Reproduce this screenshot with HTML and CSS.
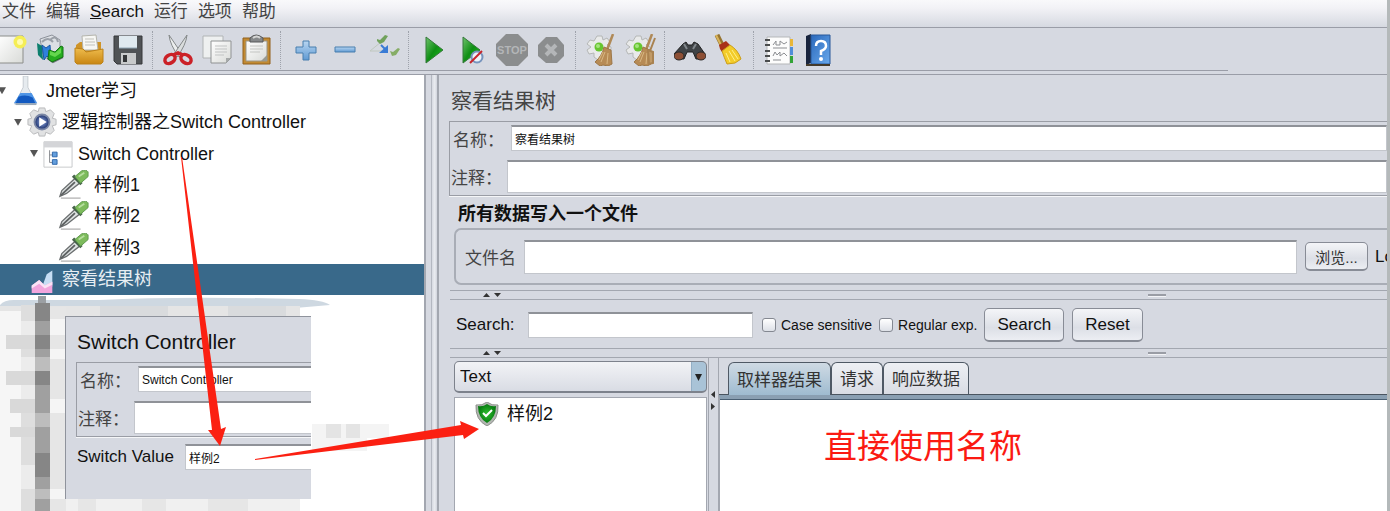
FILE: index.html
```html
<!DOCTYPE html>
<html lang="zh-CN">
    <head>
        <meta charset="utf-8">
        <title>JMeter</title>
        <link rel="stylesheet" href="styles.css">
    </head>
    <body>

        <!-- gradients and symbols shared by the icons -->
        <svg class="defs" width="0" height="0" aria-hidden="true">
            <defs>
                <linearGradient id="paper" x1="0" y1="0" x2="1" y2="1"><stop offset="0" stop-color="#ffffff"/><stop offset="1" stop-color="#d9dbd8"/></linearGradient>
                <linearGradient id="gold" x1="0" y1="0" x2="0" y2="1"><stop offset="0" stop-color="#efbd4e"/><stop offset="1" stop-color="#c98612"/></linearGradient>
                <linearGradient id="green" x1="0" y1="0" x2="1" y2="1"><stop offset="0" stop-color="#6fc36c"/><stop offset="0.5" stop-color="#0f8f14"/><stop offset="1" stop-color="#1fc41f"/></linearGradient>
                <linearGradient id="blue" x1="0" y1="0" x2="0" y2="1"><stop offset="0" stop-color="#b9d6f1"/><stop offset="1" stop-color="#5f9ad3"/></linearGradient>
                <linearGradient id="book" x1="0" y1="0" x2="1" y2="1"><stop offset="0" stop-color="#2a68bb"/><stop offset="1" stop-color="#69a9ec"/></linearGradient>
                <radialGradient id="orb"><stop offset="0" stop-color="#8fa8e0"/><stop offset="1" stop-color="#182c68"/></radialGradient>
                <radialGradient id="shield"><stop offset="0" stop-color="#2fc02f"/><stop offset="1" stop-color="#067a10"/></radialGradient>
                <symbol id="dropper" viewBox="0 0 32 32">
                    <path d="M2 30h21" stroke="#b9b9b9" stroke-width="1.5"/>
                    <path d="M1 28l2-6L17 9l5 5L8 25z" fill="#dfe3e3" stroke="#6b6f70" stroke-width="1.4"/>
                    <path d="M2 27L17 13" stroke="#5d6162" stroke-width="2"/>
                    <path d="M15 6l9 9" stroke="#47634a" stroke-width="3.5"/>
                    <path d="M17 7l7-6q5-2 7 1v5l-8 7z" fill="#7dbb5c" stroke="#5d974c"/>
                    <path d="M21 7l6-4" stroke="#b6de9f" stroke-width="2"/>
                </symbol>
                <symbol id="gear-broom" viewBox="0 0 32 32">
                    <path d="M12 2h5l1 4 4-2 3 4-3 3 4 2v5l-4 1 1 4-4 2-3-2-3 3-4-3v-4l-5 1-2-4 4-3-4-3 3-4 4 1z" fill="#e9eaea" stroke="#b5b7b6"/>
                    <circle cx="14" cy="13" r="4.5" fill="#67c52f"/><circle cx="13" cy="12" r="2" fill="#a4e47e"/>
                    <path d="M28 0l-6 16" stroke="#b08a58" stroke-width="2.5"/>
                    <path d="M19 13l7 3 1 14-4 2-5-1-3 1-5-4q7-6 9-15z" fill="#b78b55" stroke="#9c7748"/>
                    <path d="M20 18l-4 10M23 19l-1 11M18 18l-4 8" stroke="#d9b884"/>
                </symbol>
            </defs>
        </svg>

        <nav class="menubar">
            <button>文件</button>
            <button>编辑</button>
            <button class="latin"><u>S</u>earch</button>
            <button>运行</button>
            <button>选项</button>
            <button>帮助</button>
        </nav>

        <div class="toolbar">
            <button aria-label="新建"><svg viewBox="0 0 32 32"><path d="M3 2h25v27H3z" fill="url(#paper)" stroke="#8c8e8b"/><circle cx="25" cy="8" r="6.5" fill="#f5ee55"/><circle cx="25" cy="8" r="3" fill="#fffcb0"/></svg></button>
            <button aria-label="模板"><svg viewBox="0 0 32 32"><path d="M6 5l12-4 8 5v14H9z" fill="#dcdfe4" stroke="#8d929b"/><path d="M8 8q6-6 11 0M16 6q6-6 8 2" fill="none" stroke="#9ba0a8" stroke-width="2"/><path d="M3 9l5 3 1 14-5-5z" fill="#0d7f6e"/><path d="M8 11l4 3 4-3 1 15-4-4-3 4z" fill="#2f80dc" stroke="#1a56a3"/><path d="M13 24l6 4 10-5" stroke="#6f757b" stroke-width="2" fill="none"/><path d="M15 16l6 2 6-6 2 1v10l-11 5-4-3z" fill="#27ad20" stroke="#137512"/><path d="M16 17l5 2 6-5v5l-6 4-5-2z" fill="#65d74e"/></svg></button>
            <button aria-label="打开"><svg viewBox="0 0 32 32"><path d="M3 11l4-3h21v20H3z" fill="#cf9428"/><path d="M9 2l14-1 2 15H10z" fill="#f7f7f4" stroke="#b4b4ac"/><path d="M12 5h9M12 8h10M12 11h10" stroke="#c1c1bb"/><path d="M2 14l8 1 3 3 17-3v13l-2 2H4l-2-2z" fill="url(#gold)" stroke="#bd8219"/></svg></button>
            <button aria-label="保存"><svg viewBox="0 0 32 32"><path d="M2 2h28v28H5l-3-3z" fill="#505356" stroke="#37393b"/><path d="M7 2h18v12H7z" fill="#dfe9ef"/><path d="M7 14h18" stroke="#90a7b5"/><path d="M9 19h15v11H9z" fill="#c8cacb"/><path d="M11 21h4v7h-4z" fill="#333537"/></svg></button>
            <hr>
            <button aria-label="剪切"><svg viewBox="0 0 32 32"><path d="M7 1l13 19-3 3Q8 11 7 1z" fill="#eceeee" stroke="#85898a"/><path d="M25 1q-1 10-10 22l-3-3z" fill="#dadddd" stroke="#85898a"/><ellipse cx="8" cy="25" rx="5.5" ry="4" transform="rotate(-35 8 25)" fill="none" stroke="#cb2127" stroke-width="3.5"/><ellipse cx="24" cy="25" rx="5.5" ry="4" transform="rotate(35 24 25)" fill="none" stroke="#cb2127" stroke-width="3.5"/><path d="M11 21l5-2 5 2" fill="none" stroke="#cb2127" stroke-width="3.5"/></svg></button>
            <button aria-label="复制"><svg viewBox="0 0 32 32"><path d="M2 2h20v22H2z" fill="#eef0f0" stroke="#b1b4b5"/><path d="M10 7h20v17l-5 5H10z" fill="url(#paper)" stroke="#8f9293"/><path d="M14 12h12M14 15h12M14 18h12M14 21h9" stroke="#c1c3c3"/><path d="M30 24h-5v5z" fill="#a6a9a9"/></svg></button>
            <button aria-label="粘贴"><svg viewBox="0 0 32 32"><path d="M3 4h27v26H3z" fill="#c28a32" stroke="#91611c"/><path d="M6 7h21v20H6z" fill="url(#paper)" stroke="#9c9788"/><path d="M10 12h13M10 15h13M10 18h10" stroke="#c3c5c2"/><path d="M27 21v6h-6z" fill="#999a91"/><path d="M10 8V4q6-6 13 0v4z" fill="#85888a" stroke="#57595a"/><path d="M13 4q4-3 7 0" fill="none" stroke="#d4d5d5" stroke-width="2"/></svg></button>
            <hr>
            <button aria-label="展开"><svg viewBox="0 0 32 32"><path d="M13 7h6v6h7v6h-7v7h-6v-7H6v-6h7z" fill="url(#blue)" stroke="#497eae"/></svg></button>
            <button aria-label="折叠"><svg viewBox="0 0 32 32"><path d="M6 13h20v5H6z" fill="url(#blue)" stroke="#497eae"/></svg></button>
            <button aria-label="切换"><svg viewBox="0 0 32 32"><path d="M2 17L13 8M2 17h13" stroke="#c0c8bf" fill="none"/><path d="M9 5l3 1 5-5 3 1-4 6-4 2-3-3z" fill="#71a25c"/><path d="M13 11l5 5" stroke="#397bd5" stroke-width="2"/><path d="M20 11v8h-9z" fill="#397bd5"/><path d="M22 17l3 1 5-4 2 1-4 6-4 1z" fill="#86ad66"/></svg></button>
            <hr>
            <button aria-label="启动"><svg viewBox="0 0 32 32"><path d="M8 3l17 13L8 29z" fill="url(#green)" stroke="#35783a"/></svg></button>
            <button aria-label="不停顿启动"><svg viewBox="0 0 32 32"><path d="M6 3l17 13L6 29z" fill="url(#green)" stroke="#35783a"/><circle cx="20" cy="23" r="5.5" fill="#edf3fa" stroke="#7794bd" stroke-width="2"/><path d="M13 29L25 17" stroke="#c8252b" stroke-width="2"/></svg></button>
            <button aria-label="停止" disabled><svg viewBox="0 0 32 32"><path d="M10 0h12l10 10v12L22 32H10L0 22V10z" fill="#8b8d8e"/><text class="stop-text" x="16" y="20" text-anchor="middle">STOP</text></svg></button>
            <button aria-label="关闭" disabled><svg viewBox="0 0 32 32"><path d="M11 3h11l7 8v11l-7 7H11l-8-7V11z" fill="#8b8d8e"/><path d="M11 11l10 10M21 11L11 21" stroke="#b4b6b8" stroke-width="4"/></svg></button>
            <hr>
            <button aria-label="清除"><svg><use href="#gear-broom"/></svg></button>
            <button aria-label="清除全部"><svg viewBox="0 0 32 32"><use href="#gear-broom" width="32" height="32"/><path d="M31 4l-5 13M24 16l5 2v11l-4 1z" stroke="#a98250" stroke-width="2" fill="#c19a66"/></svg></button>
            <hr>
            <button aria-label="查找"><svg viewBox="0 0 32 32"><path d="M9 10l3-2 2 3h4l2-3 4 2 7 10-2 5h-7l-3-7h-6l-3 7H3l-3-5z" fill="#3f4346" stroke="#222"/><path d="M10 10l3 5M22 10l-3 5" stroke="#81878b" stroke-width="2"/><ellipse cx="5" cy="22" rx="5" ry="4" fill="#8d4f35" stroke="#2d2a29"/><ellipse cx="27" cy="22" rx="5" ry="4" fill="#8d4f35" stroke="#2d2a29"/></svg></button>
            <button aria-label="重置查找"><svg viewBox="0 0 32 32"><path d="M4 1l6 12" stroke="#96742f" stroke-width="5"/><path d="M3 1l6 12" stroke="#d9b45a" stroke-width="2"/><path d="M7 15l-1-4 7-4 4 4-1 3-7 4z" fill="#a93118"/><path d="M9 17l8-6q8 5 11 14l-6 4-8 1q-3-7-5-13z" fill="#f3cc2a" stroke="#cb9d19"/><path d="M13 19l4 9M16 17l6 10M19 16l6 9" stroke="#fff08a"/></svg></button>
            <hr>
            <button aria-label="函数助手"><svg viewBox="0 0 32 32"><path d="M4 3h23v27H4z" fill="#fcfcfc" stroke="#b5b7b9"/><path d="M27 5h3v7h-3z" fill="#e9b637"/><path d="M27 13h3v8h-3z" fill="#4f8dd8"/><path d="M27 22h3v7h-3z" fill="#31a336"/><path d="M2 6h5M2 11h5M2 17h5M2 22h5M2 27h5" stroke="#4b4d4e" stroke-width="2"/><path d="M10 11l3-4v4h4V7l4 3 3-2M10 22l2-4 2 3 3-3v4l4-3 3 3M10 14h14M10 26h8" fill="none" stroke="#8b8d91"/></svg></button>
            <button aria-label="帮助"><svg viewBox="0 0 32 32"><path d="M4 2l5-2v29l-5 2z" fill="#18243d"/><path d="M9 1h19v29H9z" fill="url(#book)" stroke="#28599a"/><path d="M4 31h24" stroke="#443a2a" stroke-width="2"/><path d="M14 12q0-5 5-5t5 5q0 3-5 5v4" fill="none" stroke="#fff" stroke-width="2.5"/><circle cx="19" cy="25" r="2" fill="#fff"/></svg></button>
        </div>

        <main class="workspace">

            <section class="tree-panel">
                <ul class="tree">
                    <li class="level-0"><i class="twist"></i><svg viewBox="0 0 32 32"><path d="M13 0h5v12l9 18H4l9-18z" fill="#e6ebef" stroke="#c3cad0"/><path d="M10 18h12l6 11H3z" fill="#4f95e6"/><path d="M8 22q8-3 15 1l3 6H5z" fill="#1259c0"/><path d="M5 30h22" stroke="#9ba9b8" stroke-width="2"/></svg><span>Jmeter学习</span></li>
                    <li class="level-1"><i class="twist"></i><svg viewBox="0 0 32 32"><path d="M13 1h6l1 4 5-2 4 4-2 5 4 1v6l-4 1 2 5-4 4-5-2-1 4h-6l-1-4-5 2-4-4 2-5-4-1v-6l4-1-2-5 4-4 5 2z" fill="#e1e2e3" stroke="#b6b8ba"/><circle cx="16" cy="16" r="8" fill="url(#orb)" stroke="#7b87a5" stroke-width="2"/><path d="M13 11l8 5-8 5z" fill="#fff"/></svg><span>逻辑控制器之Switch Controller</span></li>
                    <li class="level-2"><i class="twist"></i><svg viewBox="0 0 32 32"><path d="M1 3h30v27H1z" fill="#fff" stroke="#c5c7ca"/><path d="M1 3h30v6H1z" fill="#d4d5d8"/><path d="M7 12v13h4M7 17h4" fill="none" stroke="#84888d"/><path d="M10 14h5v5h-5zM10 22h5v5h-5z" fill="#639edc" stroke="#2b64aa"/></svg><span>Switch Controller</span></li>
                    <li class="level-3"><svg><use href="#dropper"/></svg><span>样例1</span></li>
                    <li class="level-3"><svg><use href="#dropper"/></svg><span>样例2</span></li>
                    <li class="level-3"><svg><use href="#dropper"/></svg><span>样例3</span></li>
                    <li class="level-1 selected"><i class="twist leaf"></i><svg viewBox="0 0 32 32"><path d="M17 22l4-11 6-4v17l-8 2z" fill="#c7def4"/><path d="M5 31v-8l8-6 6 6 8-4v12z" fill="#f2a5dd"/><path d="M5 23l8-6 6 6 8-4v3l-8 4-6-5-8 5z" fill="#fbe3f5"/></svg><span>察看结果树</span></li>
                </ul>

                <svg class="mosaic" viewBox="0 0 400 216" aria-hidden="true">
                    <path d="M0 10q4-5 14-5l85 0q80-4 200-1 24 1 31 6l-70 6H0z" fill="#ced8e1"/>
                    <path d="M0 11h300v10H0z" fill="#e5e5e5"/>
                    <path d="M0 16h21v200H0z" fill="#f6f6f6"/>
                    <path d="M21 10h14v206H21z" fill="#dedede"/>
                    <path d="M35 8h15v208H35z" fill="#a0a0a0"/>
                    <path d="M50 12h16v204H50z" fill="#e6e6e6"/>
                    <path d="M38 1h8v8h-8z" fill="#9b9fa3"/>
                    <path d="M6 40h29v14H6zM6 76h29v14H6zM10 104h25v14H10zM10 132h25v10H10z" fill="#d9d9d9"/>
                    <path d="M21 26h14v14H21zM21 62h14v14H21zM21 90h14v14H21zM21 170h14v24H21z" fill="#ececec"/>
                    <path d="M35 8h15v18H35zM35 40h15v14H35zM35 76h15v14H35zM35 158h15v24H35z" fill="#868686"/>
                    <path d="M35 62h15v14H35zM35 118h15v14H35zM35 194h15v10H35z" fill="#bdbdbd"/>
                    <path d="M50 24h16v16H50zM50 54h16v10H50zM50 104h16v14H50zM50 194h16v10H50z" fill="#f5f5f5"/>
                    <path d="M66 203h234v13H66z" fill="#f0f0f0"/>
                    <path d="M78 203h18v13H78zM142 203h24v13h-24zM208 203h40v13h-40z" fill="#e6e6e6"/>
                    <path d="M100 11h68v10H100zM228 11h58v10h-58z" fill="#d9dbdd"/>
                    <path d="M312 129h77v14h-77zM312 143h55v13h-55z" fill="#f4f4f4"/>
                    <path d="M326 129h15v14h-15zM346 129h14v14h-14z" fill="#e4e4e4"/>
                </svg>

                <form class="popup">
                    <h2>Switch Controller</h2>
                    <div class="name-box">
                        <div class="row name"><label for="sc-name">名称：</label><input id="sc-name" value="Switch Controller"></div>
                        <div class="row comment"><label for="sc-comment">注释：</label><input id="sc-comment"></div>
                    </div>
                    <div class="row value"><label for="sc-value">Switch Value</label><input id="sc-value" value="样例2"></div>
                </form>
            </section>

            <div class="splitter"></div>

            <section class="detail">
                <h1>察看结果树</h1>
                <div class="name-box">
                    <div class="row name"><label for="name">名称：</label><input id="name" value="察看结果树"></div>
                    <div class="row comment"><label for="comment">注释：</label><input id="comment"></div>
                </div>

                <h3>所有数据写入一个文件</h3>
                <div class="file-box">
                    <label for="filename">文件名</label>
                    <input id="filename">
                    <button class="btn browse">浏览...</button>
                    <span class="log">Lo</span>
                </div>

                <div class="divider"><i class="up"></i><i class="down"></i><i class="grip"></i></div>

                <form class="search-row">
                    <label for="search">Search:</label>
                    <input id="search" class="search">
                    <label class="check"><input type="checkbox">Case sensitive</label>
                    <label class="check"><input type="checkbox">Regular exp.</label>
                    <button type="button" class="btn">Search</button>
                    <button type="button" class="btn">Reset</button>
                </form>

                <div class="divider"><i class="up"></i><i class="down"></i><i class="grip"></i></div>

                <div class="results">
                    <div class="result-list">
                        <div class="combo">
                            <select aria-label="Renderer"><option>Text</option></select>
                        </div>
                        <ul>
                            <li><svg viewBox="0 0 24 24"><path d="M12 0q5 4 11 3 1 15-11 21Q0 18 1 3q6 1 11-3z" fill="#b3b6b2" stroke="#8d918c"/><path d="M12 2q4 3 9 2 0 12-9 17Q3 16 3 4q5 1 9-2z" fill="url(#shield)"/><path d="M8 11l3 3 6-6" fill="none" stroke="#fff" stroke-width="2"/></svg><span>样例2</span></li>
                        </ul>
                    </div>
                    <div class="mini-splitter"><i class="left"></i><i class="right"></i></div>
                    <div class="tabs">
                        <div class="tab-bar">
                            <button class="active">取样器结果</button>
                            <button>请求</button>
                            <button>响应数据</button>
                        </div>
                        <div class="tab-content"><p class="note">直接使用名称</p></div>
                    </div>
                </div>
            </section>
        </main>

        <svg class="arrows" width="500" height="500" aria-hidden="true">
            <path d="M181 157h1l39 272 5-2-6 19-12-16 4 0z"/>
            <path d="M255 460v-1l206-34-1-4 19 8-15 10-1-4z"/>
        </svg>

    </body>
</html>
```

FILE: styles.css
```css
* { margin: 0; padding: 0; box-sizing: border-box; font-family: "Liberation Sans", "Noto Sans CJK SC", sans-serif; }
html, body { width: 100%; height: 100%; }
body { display: flex; flex-direction: column; overflow: hidden; position: relative; background: #d6d9e1; border-right: 3px solid #b4b9ba; font-size: 17px; color: #111111; }
button, input, select { font-size: 17px; color: #111111; }
ul { list-style: none; }
.defs { position: absolute; }

.menubar { height: 28px; flex: none; display: flex; gap: 10px; padding: 0 2px 3px 2px; background: linear-gradient(#f9f9fb, #f2f2f6 30%, #d6d9e1); border-bottom: 1px solid #9a9da7; }
.menubar button { background: none; border: none; line-height: 22px; color: #444444; }
.menubar .latin { color: #111111; }

.toolbar { height: 43px; flex: none; width: 1237px; max-width: 100%; display: flex; align-items: center; margin-left: -9px; padding-top: 1px; border-bottom: 1px solid #9a9da7; }
.toolbar button { width: 39px; height: 40px; flex: none; background: none; border: none; display: flex; align-items: center; justify-content: center; }
.toolbar svg { width: 32px; height: 32px; }
.toolbar hr { width: 1px; height: 38px; margin: 0 5px; border: none; border-left: 1px dotted #9ea2ab; }
.toolbar .stop-text { font-size: 11px; font-weight: bold; fill: #b4b6b8; }

.workspace { flex: 1; min-height: 0; display: flex; margin-top: 3px; border-top: 1px solid #9a9da7; }

.tree-panel { position: relative; width: 424px; flex: none; background: #ffffff; overflow: hidden; }
.tree { height: 220px; display: grid; grid-auto-rows: 1fr; font-size: 18px; }
.tree li { display: flex; align-items: center; line-height: 28px; }
.tree li svg { width: 32px; height: 30px; flex: none; margin-right: 4px; }
.tree .twist { width: 8px; height: 7px; flex: none; margin-right: 4px; background: #555555; clip-path: polygon(0 0, 100% 0, 50% 100%); }
.tree .leaf { visibility: hidden; }
.tree .level-0 { margin-left: -2px; }
.tree .level-1 { padding-left: 14px; }
.tree .level-2 { padding-left: 30px; }
.tree .level-3 { padding-left: 58px; }
.tree .selected { background: #39698a; color: #e8eef3; }

.mosaic { position: absolute; left: 0; top: 220px; width: 400px; height: 216px; }

.popup { position: absolute; left: 65px; top: 241px; width: 246px; height: 183px; padding: 5px 0 0 11px; background: #d6d9e1; border-left: 1px solid #8f939c; border-top: 1px solid #8f939c; overflow: hidden; }
.popup h2 { font-size: 21px; font-weight: normal; line-height: 40px; }
.popup input { border-right: none; }

.row { display: flex; align-items: center; }
.row label { flex: none; color: #444444; }
.row input { flex: 1; min-width: 0; height: 26px; padding: 0 3px; font-size: 12px; }
.row.name { padding-left: 3px; }
.row.name label { width: 58px; }
.row.comment { padding-left: 1px; }
.row.comment label { width: 56px; }
.row.comment input { height: 33px; }
.row.value { margin-top: 7px; }
.row.value label { width: 108px; color: #111111; }

input { background: #ffffff; border: 1px solid #c3c6cc; border-top: 2px solid #8f9298; border-radius: 0; outline: none; }

.name-box { display: flex; flex-direction: column; gap: 9px; margin-left: -1px; padding: 3px 0 2px 0; border: 1px solid #9a9da5; border-right: none; box-shadow: 0 1px 0 #f5f6f8; }

.splitter { width: 14px; flex: none; border-left: 2px solid #a3a7b0; border-right: 1px solid #a3a7b0; background: linear-gradient(90deg, #d6d9e1 5px, #b4b8c1 5px, #b4b8c1 6px, #d6d9e1 6px, #eceef2 9px, #d6d9e1 10px); }

.detail { flex: 1; min-width: 0; display: flex; flex-direction: column; padding-left: 11px; border-left: 1px solid #a3a7b0; overflow: hidden; }
.detail h1 { padding: 6px 0 0 1px; font-size: 21px; font-weight: normal; line-height: 40px; color: #444444; }
.detail h3 { padding: 4px 0 0 8px; font-size: 18px; line-height: 28px; }

.file-box { height: 57px; flex: none; display: flex; align-items: center; margin-left: 4px; padding-left: 9px; border: 2px solid #a9adb6; border-right: none; border-radius: 7px 0 0 7px; overflow: hidden; }
.file-box label { width: 59px; flex: none; color: #444444; }
.file-box input { flex: 1; min-width: 0; height: 34px; }
.file-box .browse { width: 63px; height: 29px; flex: none; margin: 0 7px 0 8px; font-size: 15px; color: #333333; }
.file-box .log { width: 12px; flex: none; overflow: hidden; }

.btn { background: linear-gradient(#f4f5f8, #dcdfe6 60%, #eceef3); border: 1px solid #888c96; border-bottom: 2px solid #888c96; border-radius: 5px; color: #111111; }

.divider { height: 10px; flex: none; position: relative; display: flex; align-items: center; gap: 4px; padding-left: 33px; border-top: 1px solid #a3a7b0; border-bottom: 1px solid #a3a7b0; }
.file-box + .divider { margin-top: 5px; }
.divider i { width: 7px; height: 4px; background: #333333; }
.divider .up { clip-path: polygon(0 100%, 100% 100%, 50% 0); }
.divider .down { clip-path: polygon(0 0, 100% 0, 50% 100%); }
.divider .grip { width: 18px; height: 3px; margin-left: auto; margin-right: 221px; border-top: 2px solid #9a9da5; background: #f2f3f6; }

.search-row { height: 48px; flex: none; display: flex; align-items: center; padding: 2px 0 0 6px; }
.search-row > label:first-child { width: 72px; }
.search-row .search { width: 225px; height: 26px; margin-right: 9px; }
.search-row .check { display: flex; align-items: center; gap: 5px; margin-right: 7px; font-size: 14px; }
.search-row .check input { appearance: none; width: 14px; height: 14px; border: 1px solid #848891; border-radius: 3px; background: linear-gradient(#ffffff, #dde0e7); }
.search-row .btn { height: 34px; padding: 0 12px; margin-right: 8px; }

.results { flex: 1; min-height: 0; display: flex; padding-left: 4px; }
.result-list { width: 253px; flex: none; display: flex; flex-direction: column; padding-top: 3px; }
.result-list ul { flex: 1; margin-top: 4px; padding: 3px 0 0 20px; background: #ffffff; border: 1px solid #a3a7b0; border-bottom: none; font-size: 18px; }
.result-list li { display: flex; align-items: center; gap: 8px; line-height: 26px; }
.result-list li svg { width: 24px; height: 24px; }

.combo { position: relative; height: 32px; }
.combo select { appearance: none; width: 100%; height: 100%; padding: 0 5px; background: linear-gradient(90deg, transparent 236px, #7c9ab4 236px, #a9c3d7 237px), linear-gradient(#f2f3f6, #d9dce4); border: 1px solid #7d828c; border-bottom-width: 2px; border-radius: 5px; outline: none; }
.combo::after { content: ""; position: absolute; right: 5px; top: 13px; width: 7px; height: 7px; background: #222222; clip-path: polygon(0 0, 100% 0, 50% 100%); pointer-events: none; }

.mini-splitter { width: 12px; flex: none; display: flex; flex-direction: column; align-items: center; gap: 5px; padding-top: 33px; border-left: 1px solid #d6d9e1; border-right: 1px solid #a3a7b0; box-shadow: inset 2px 0 0 -1px #a3a7b0; }
.mini-splitter i { width: 4px; height: 7px; background: #333333; }
.mini-splitter .left { clip-path: polygon(100% 0, 100% 100%, 0 50%); }
.mini-splitter .right { clip-path: polygon(0 0, 0 100%, 100% 50%); }

.tabs { flex: 1; min-width: 0; display: flex; flex-direction: column; padding-top: 4px; }
.tab-bar { height: 33px; flex: none; display: flex; padding-left: 9px; border-bottom: 1px solid #4a545f; }
.tab-bar button { padding: 0 8px 2px 8px; background: linear-gradient(#eef0f4, #d9dce4); border: 1px solid #4f5965; border-bottom: none; border-radius: 6px 6px 0 0; color: #333333; }
.tab-bar .active { background: linear-gradient(#cfdae4, #9fbbd0); height: 33px; }
.tab-content { flex: 1; position: relative; background: #ffffff; border-top: 4px solid #8a9fb2; box-shadow: inset 0 1px 0 #4a5f73; border-left: 1px solid #a3a7b0; }
.tab-content .note { position: absolute; left: 104px; top: 24px; font-size: 33px; line-height: 48px; color: #fb1a12; white-space: nowrap; }

.arrows { position: absolute; left: 0; top: 0; fill: #fb2012; pointer-events: none; }
```
